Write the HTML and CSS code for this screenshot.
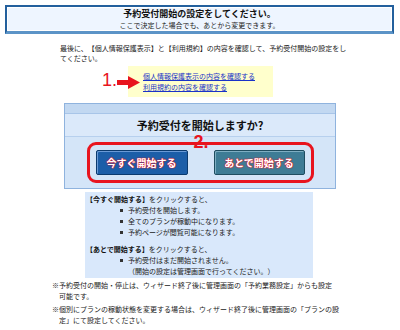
FILE: index.html
```html
<!DOCTYPE html>
<html lang="ja">
<head>
<meta charset="utf-8">
<title>予約受付開始の設定</title>
<link rel="stylesheet" href="styles.css">
</head>
<body>
<div class="page">
  <div class="header">
    <h1 class="title">予約受付開始の設定をしてください。</h1>
    <p class="subtitle">ここで決定した場合でも、あとから変更できます。</p>
  </div>

  <p class="intro">最後に、【個人情報保護表示】と【利用規約】の内容を確認して、予約受付開始の設定をしてください。</p>

  <div class="linkbox">
    <span class="mark mark-1">1.</span>
    <svg class="arrow" width="23" height="13" viewBox="0 0 23 13"><path d="M0 4H11V0L23 6.5L11 13V9H0Z" fill="#e8141e"/></svg>
    <a class="link" href="#">個人情報保護表示の内容を確認する</a>
    <a class="link" href="#">利用規約の内容を確認する</a>
  </div>

  <div class="confirm">
    <div class="confirm-top"></div>
    <h2 class="confirm-title">予約受付を開始しますか?</h2>
    <div class="actions">
      <div class="ring">
        <span class="mark mark-2">2.</span>
        <button class="btn btn-now" type="button">今すぐ開始する</button>
        <button class="btn btn-later" type="button">あとで開始する</button>
      </div>
    </div>
  </div>

  <div class="info">
    <p class="info-head"><b>【今すぐ開始する】</b>をクリックすると、</p>
    <ul class="bullets">
      <li>予約受付を開始します。</li>
      <li>全てのプランが稼動中になります。</li>
      <li>予約ページが閲覧可能になります。</li>
    </ul>
    <p class="info-head gap"><b>【あとで開始する】</b>をクリックすると、</p>
    <ul class="bullets">
      <li>予約受付はまだ開始されません。<br>（開始の設定は管理画面で行ってください。）</li>
    </ul>
  </div>

  <div class="notes">
    <p class="note note-tight">※予約受付の開始・停止は、ウィザード終了後に管理画面の「予約業務設定」からも設定可能です。</p>
    <p class="note">※個別にプランの稼動状態を変更する場合は、ウィザード終了後に管理画面の「プランの設定」にて設定してください。</p>
  </div>
</div>
</body>
</html>
```

FILE: styles.css
```css
* { box-sizing: border-box; }
html, body { margin: 0; padding: 0; background: #fff; }
body {
  font-family: "Noto Sans CJK JP", "Noto Sans", sans-serif;
  color: #222;
  width: 400px;
  height: 330px;
  overflow: hidden;
  text-spacing-trim: space-all;
}
p, h1, h2, ul { margin: 0; padding: 0; }

.header {
  margin: 5px 6px 0 5px;
  height: 29px;
  border: 2px solid #23609d;
  border-bottom: 3px solid #5c94c7;
  background: #eef5ff;
  box-shadow: inset 0 0 0 1px #fff;
  text-align: center;
  padding-top: 1px;
}
.title {
  font-size: 9px;
  font-weight: bold;
  line-height: 12px;
  color: #111;
}
.subtitle {
  font-size: 7px;
  line-height: 10px;
  color: #222;
}

.intro {
  margin: 9px 0 0 60px;
  width: 290px;
  font-size: 7px;
  line-height: 10px;
}

.linkbox {
  position: relative;
  margin: 3px 0 0 128px;
  width: 145px;
  height: 31px;
  background: #ffffcc;
  padding: 5px 0 0 15px;
}
.link {
  display: block;
  font-size: 7px;
  line-height: 11px;
  color: #1a33c8;
  text-decoration: underline;
}

.mark {
  position: absolute;
  font-family: "Liberation Sans", Arial, sans-serif;
  font-size: 18px;
  line-height: 18px;
  color: #e8141e;
}
.mark-1 { left: -26px; top: 5px; }
.arrow { position: absolute; left: -11px; top: 10px; }
.mark-2 { left: 104px; top: -12px; font-weight: bold; }

.confirm {
  margin: 6px 0 0 64px;
  width: 272px;
  border: 1px solid #8fb3de;
  background: #d4e5f8;
}
.confirm-top {
  height: 10px;
  background: #c2d8f1;
  border-bottom: 1px solid #a8c5e8;
}
.confirm-title {
  font-size: 11px;
  font-weight: bold;
  line-height: 22px;
  text-align: center;
  color: #111;
  background: #dbe9fa;
  border-bottom: 1px solid #b7d0ee;
}
.actions {
  padding: 5px 0 5px;
}
.ring {
  position: relative;
  display: flex;
  gap: 26px;
  width: 227px;
  margin: 0 auto;
  border: 3px solid #e8141e;
  border-radius: 9px;
  padding: 5px 6px;
}
.btn {
  height: 25px;
  padding: 0;
  font-family: "Noto Sans CJK JP", sans-serif;
  font-size: 10px;
  font-weight: bold;
  color: #fff;
  text-shadow: 0 0 1px #f01020, 0 0 1px #f01020, 0 0 1px #f01020;
  border-radius: 2px;
}
.btn-now {
  width: 92px;
  background: #1c5ea8;
  border: 1px solid #0b3a6e;
  box-shadow: inset 1px 1px 0 #6a9ad6;
}
.btn-later {
  width: 91px;
  background: #3e7c95;
  border: 1px solid #1f4d60;
  box-shadow: inset 1px 1px 0 #7eaec2;
}

.info {
  margin: 3px 0 0 85px;
  width: 228px;
  background: #d9e8fb;
  padding: 2px 0 1px 1px;
  font-size: 7px;
  line-height: 11px;
}
.info-head b { font-weight: bold; color: #111; }
.info-head.gap { margin-top: 6px; }
.bullets {
  list-style: none;
  padding-left: 42px;
}
.bullets li { position: relative; }
.bullets li::before {
  content: "";
  position: absolute;
  left: -8px;
  top: 4px;
  width: 3px;
  height: 3px;
  background: #333;
}

.notes {
  margin: 2px 0 0 52px;
  width: 290px;
  font-size: 7px;
  line-height: 11px;
}
.note {
  padding-left: 7px;
  text-indent: -7px;
  margin-bottom: 2px;
}
.note-tight { padding-right: 6px; }
```
